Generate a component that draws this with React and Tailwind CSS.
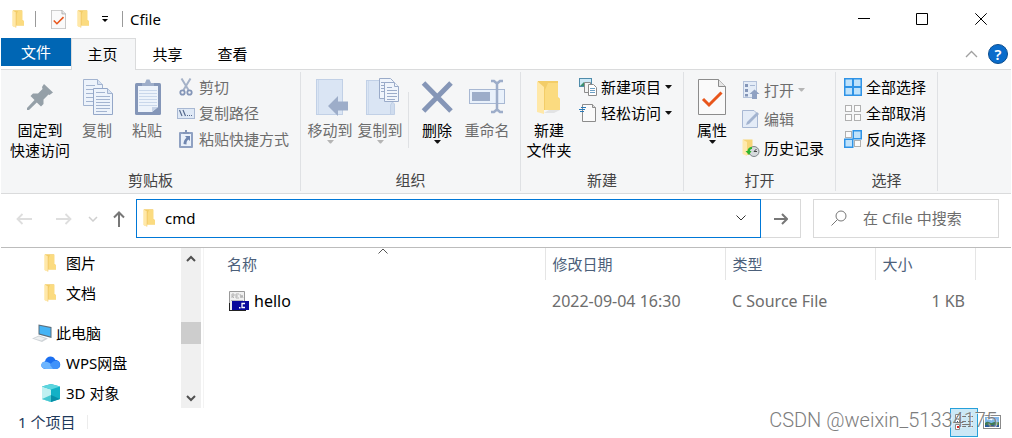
import React, { useState } from 'react';

function Folder({ className = 'w-3 h-[18px]' }) {
  return (
    <svg viewBox="0 0 24 36" preserveAspectRatio="none" className={className}>
      <path d="M2 0.5H20.5V20L24 22V31H8L2 33Z" fill="#f3cd68" />
      <path d="M9 9L12 2H20.5V21L24 22V31H9Z" fill="#fbdb80" />
      <path d="M0.5 0.5L8 5V35.5L0.5 32Z" fill="#ffe8a8" />
      <path d="M8 5V35" stroke="#eec261" strokeWidth="1" />
    </svg>
  );
}

function Caret({ className = 'text-black' }) {
  return (
    <svg viewBox="0 0 7 4" className={`w-[7px] h-1 shrink-0 ${className}`}>
      <path d="M0 0H7L4 3.5H3Z" fill="currentColor" />
    </svg>
  );
}

function CheckDoc({ className }) {
  return (
    <svg viewBox="0 0 28 36" className={className}>
      <path d="M0.5 0.5H20.5L27.5 7.5V35.5H0.5Z" fill="#fafafa" stroke="#8c8c8c" />
      <path d="M20.5 0.5V7.5H27.5" fill="#e6e6e6" stroke="#8c8c8c" />
      <path d="M5 20L11 26L23.5 13.5" fill="none" stroke="#e8561c" strokeWidth="3" />
    </svg>
  );
}

const bigIcon = 'w-10 h-10';
const smallIcon = 'w-[18px] h-[18px] shrink-0';

const PinIcon = () => (
  <svg viewBox="0 0 40 40" className={bigIcon}>
    <path d="M24 6L33 14.5L29.5 17L28.5 16.5L23.5 21.5V26L21 28.5L16.8 24.5L9 32H7V30L14.5 22L10.5 18L13 15.5H18L22.5 11L22 9Z" fill="#95a0a8" />
  </svg>
);

const CopyIcon = () => (
  <svg viewBox="0 0 40 40" className={bigIcon}>
    <g fill="#edf3fb" stroke="#a3b4d0">
      <path d="M6.5 1.5H20.5L25.5 6.5V27.5H6.5Z" />
      <path d="M20.5 1.5V6.5H25.5" fill="#d7e2f2" />
      <path d="M9 7.5H18M9 11.5H22M9 15.5H16M9 19.5H16M9 23.5H16" />
      <path d="M16.5 10.5H30.5L35.5 15.5V36.5H16.5Z" stroke="#94a7c8" />
      <path d="M30.5 10.5V15.5H35.5" fill="#d7e2f2" />
      <path d="M19 14.5H28M19 18.5H33M19 21.5H33M19 24.5H33M19 27.5H33M19 30.5H33M19 33.5H30" />
    </g>
  </svg>
);

const PasteIcon = () => (
  <svg viewBox="0 0 40 40" className={bigIcon}>
    <rect x="8" y="5" width="26" height="32" rx="1.5" fill="#8496b8" />
    <path d="M11 8H31V29L25 34H11Z" fill="#edf3fb" />
    <path d="M25 34V29H31Z" fill="#c5d2e7" />
    <path d="M12 12.5H30M12 15.5H30M12 18.5H30M12 21.5H30M12 24.5H30M12 27.5H30" stroke="#c9d7eb" />
    <path d="M15 8V5H18L19.5 1.5H22.5L24 5H27V8Z" fill="#9dadc9" />
  </svg>
);

const MoveIcon = () => (
  <svg viewBox="0 0 40 40" className={bigIcon}>
    <rect x="6.5" y="1.5" width="26" height="35" fill="#dae5f4" stroke="#c1d0e6" />
    <path d="M8.5 2V36" stroke="#cbd9ec" />
    <path d="M18 28L28 18V23.5H38V32.5H28V38Z" fill="#9dadc9" />
  </svg>
);

const CopyToIcon = () => (
  <svg viewBox="0 0 40 40" className={bigIcon}>
    <rect x="6.5" y="2.5" width="26" height="34" fill="#dae5f4" stroke="#c1d0e6" />
    <path d="M8.5 3V36" stroke="#cbd9ec" />
    <path d="M30.5 36.5V27L32.5 24L34.5 26V36.5Z" fill="#cfdcee" stroke="#c1d0e6" />
    <g fill="#f0f5fc" stroke="#9aabc9">
      <path d="M19.5 0.5H30.5L33.5 3.5V20.5H19.5Z" />
      <path d="M21 4.5H25M21 7.5H25M21 10.5H25M21 13.5H25" />
      <path d="M24.5 4.5H34.5L38.5 8.5V23.5H24.5Z" />
      <path d="M34.5 4.5V8.5H38.5" />
      <path d="M27 9.5H32M27 12.5H37M27 15.5H37M27 18.5H37M27 21.5H35" />
    </g>
  </svg>
);

const DeleteIcon = () => (
  <svg viewBox="0 0 40 40" className={bigIcon}>
    <path d="M6.5 5L34 33M34 5L6.5 33" stroke="#8596b7" strokeWidth="5" />
  </svg>
);

const RenameIcon = () => (
  <svg viewBox="0 0 40 40" className={bigIcon}>
    <rect x="2.5" y="11.5" width="35" height="14" fill="#e9f1fb" stroke="#a8b8d3" />
    <rect x="5" y="14" width="18" height="9" fill="#9dadc9" />
    <path d="M24 3H27L30 5.5L33 3H36M30 5.5V31.5M24 34H27L30 31.5L33 34H36" fill="none" stroke="#9dadc9" strokeWidth="2.5" />
  </svg>
);

const NewFolderIcon = () => (
  <svg viewBox="0 0 40 40" className={bigIcon}>
    <path d="M15 35L20 32H31L25 35Z" fill="#e2e3e4" />
    <path d="M9 3H29V19L31 21V32H15L9 34Z" fill="#f3cd68" />
    <path d="M16 12L19 5H29V20L31 21V32H16Z" fill="#fbdb80" />
    <path d="M8 3L15 9V36L8 34Z" fill="#ffe8a8" />
  </svg>
);

const PropertiesIcon = () => (
  <span className="flex w-10 h-10 justify-center pt-px">
    <CheckDoc className="w-7 h-9" />
  </span>
);

const CutIcon = () => (
  <svg viewBox="0 0 18 18" className={smallIcon}>
    <path d="M4.5 0.5L11.5 12M13.5 0.5L6.5 12" stroke="#a5b2c8" strokeWidth="2" />
    <circle cx="5.5" cy="14.5" r="2.2" fill="none" stroke="#8496b8" strokeWidth="1.8" />
    <circle cx="12.5" cy="14.5" r="2.2" fill="none" stroke="#8496b8" strokeWidth="1.8" />
  </svg>
);

const PathIcon = () => (
  <svg viewBox="0 0 18 18" className={smallIcon}>
    <rect x="0.5" y="4.5" width="17" height="10" fill="#dfe9f6" stroke="#a8b8d3" />
    <path d="M2.5 6L5 12M6 6L8.5 12" stroke="#566a8e" strokeWidth="1.2" />
    <path d="M10 11.5H11M12 11.5H13M14 11.5H15" stroke="#566a8e" />
  </svg>
);

const ShortcutIcon = () => (
  <svg viewBox="0 0 18 18" className={smallIcon}>
    <rect x="2" y="2" width="14" height="16" rx="1" fill="#8fa1c2" />
    <path d="M4 4H14V16H4Z" fill="#eaf1fa" />
    <path d="M6 4V2H8V0H10V2H12V4Z" fill="#8496b8" />
    <path d="M8 6H13V11L11.3 9.5C9.500 11 9.500 12.500 9.500 14.500L6.500 14C6.500 11.500 7.500 9.500 9.500 7.800Z" fill="#6f86b0" />
  </svg>
);

const NewItemIcon = () => (
  <svg viewBox="0 0 18 18" className={smallIcon}>
    <rect x="0.5" y="0.5" width="12" height="8" fill="#cde9f7" stroke="#4f8cab" />
    <path d="M1 8L5 4L8 8Z" fill="#3c8f6c" />
    <path d="M5.5 4.5H11.5V14.5H5.5Z" fill="#f4f4f4" stroke="#8c8c8c" />
    <path d="M9.5 6.5H14.5L17.5 9.5V17.5H9.5Z" fill="#fff" stroke="#8c8c8c" />
    <path d="M11 10.5H16M11 12.5H16M11 14.5H16" stroke="#6ea0c4" />
  </svg>
);

const EasyAccessIcon = () => (
  <svg viewBox="0 0 18 18" className={smallIcon}>
    <path d="M3.5 0.5H13.5L16.5 3.5V17.5H3.5Z" fill="#fafafa" stroke="#8c8c8c" />
    <path d="M13.5 0.5V3.5H16.5" fill="#ddd" stroke="#8c8c8c" />
    <path d="M2 3.5H7M0 5.5H6M1 7.5H5" stroke="#2a7ab8" strokeWidth="1.2" />
  </svg>
);

const OpenIcon = () => (
  <svg viewBox="0 0 18 18" className={smallIcon}>
    <rect x="1.5" y="0.5" width="13" height="16" fill="#e4ecf7" stroke="#b4c2da" />
    <path d="M3 3H6V6H3ZM3 8H6V11H3ZM3 13H6V15.5H3Z" fill="#8496b8" />
    <path d="M8 4.5H13" stroke="#a8b8d3" />
    <path d="M12.500 8.500L17.500 13H15V18H10V13H7.500Z" fill="#8fa1c2" />
  </svg>
);

const EditIcon = () => (
  <svg viewBox="0 0 18 18" className={smallIcon}>
    <path d="M0.5 0.5H12L15.5 4V17.5H0.5Z" fill="#e4ecf7" stroke="#a8b8d3" />
    <path d="M4 15L5 12L15 2L17 4L7 14Z" fill="#a3b4d0" />
  </svg>
);

const HistoryIcon = () => (
  <svg viewBox="0 0 18 18" className={smallIcon}>
    <path d="M1 0.5H10.500V15L5 16Z" fill="#f7d577" />
    <path d="M0.5 0.5L5 3V17L0.5 15Z" fill="#ffe9ad" />
    <circle cx="12" cy="12.5" r="5" fill="#d6dadd" stroke="#7e8589" />
    <path d="M12 12.500L14.500 10M12 12.500H15" fill="none" stroke="#444" />
    <path d="M10 8C7 8 5.5 10 5.5 12H3.5L7 16L9.5 12H8C8 10.5 9 10 10 10Z" fill="#2fb52f" />
  </svg>
);

const Tile = ({ x, y, on }) => (
  <rect x={x} y={y} width={on ? 8 : 6} height={on ? 8 : 6} fill={on ? '#bfe2fb' : '#fbfbfb'} stroke={on ? '#2f93e6' : '#b0b0b0'} strokeWidth={on ? 1.5 : 1} />
);

const SelectAllIcon = () => (
  <svg viewBox="0 0 18 18" className={smallIcon}>
    <Tile x={0.75} y={0.75} on />
    <Tile x={9.25} y={0.75} on />
    <Tile x={0.75} y={9.25} on />
    <Tile x={9.25} y={9.25} on />
  </svg>
);

const SelectNoneIcon = () => (
  <svg viewBox="0 0 18 18" className={smallIcon}>
    <Tile x={1.5} y={1.5} />
    <Tile x={10.5} y={1.5} />
    <Tile x={1.5} y={10.5} />
    <Tile x={10.5} y={10.5} />
  </svg>
);

const InvertIcon = () => (
  <svg viewBox="0 0 18 18" className={smallIcon}>
    <Tile x={1.5} y={1.5} />
    <Tile x={9.25} y={0.75} on />
    <Tile x={0.75} y={9.25} on />
    <Tile x={10.5} y={10.5} />
  </svg>
);

const ComputerIcon = () => (
  <svg viewBox="0 0 20 18" className="w-5 h-[18px] shrink-0">
    <path d="M6.5 0.5L19.500 3V14L6.5 10.500Z" fill="#5d6f7c" />
    <path d="M7.5 1.8L18.500 4V12.500L7.5 9.500Z" fill="#45b4f5" />
    <path d="M0 14.500L7 11.500L16 14.500L10 18Z" fill="#cfd4d8" />
    <path d="M2 14.500L7 12.500L13 14.500L9.500 16.500Z" fill="#eef0f1" />
  </svg>
);

const CloudIcon = () => (
  <svg viewBox="0 0 20 18" className="w-5 h-[18px] shrink-0">
    <path d="M5 15C-1 15-1 8 4 7.5C5 2 12 0.5 14.5 6C20.5 6 21 15 15 15Z" fill="#1b6ff0" />
    <path d="M3 7.800C7 7 10 9 14 15H5C-1 15-1 9 3 7.800Z" fill="#6db5ff" />
    <path d="M9 11C11 7 14 6 17 7C20 9 19.5 15 15 15H12Z" fill="#3f92fa" />
  </svg>
);

const CubeIcon = () => (
  <svg viewBox="0 0 20 18" className="w-5 h-[18px] shrink-0">
    <path d="M10 0L19 2.5V15L10 18L1 15V2.5Z" fill="#12b1c6" />
    <path d="M1 2.5L10 5.5V18L1 15Z" fill="#bff0f1" />
    <path d="M10 0L19 2.5L10 5.5L1 2.5Z" fill="#5cd5de" />
    <path d="M1 15L10 11V18Z" fill="#46c8d2" />
    <path d="M10 11L19 15L10 18Z" fill="#078fa8" />
  </svg>
);

const CFileIcon = () => (
  <svg viewBox="0 0 20 20" className="w-5 h-5 shrink-0">
    <path d="M0.5 0.5H15.5V19.5H0.5Z" fill="#f0f0f0" stroke="#999" />
    <path d="M3 3V7M3 3H5V5H3L5 7M10 3H7V7H10M7 5H9M11 3L12 7L13 4L14 7" fill="none" stroke="#b5b5b5" />
    <path d="M2 9.5H14" stroke="#bbb" />
    <rect x="3" y="10" width="17" height="9" fill="#0a0a9c" />
    <path d="M0 19.5H17M0.500 12V19" stroke="#222" />
    <path d="M16 12.5H13V16.5H16" fill="none" stroke="#fff" strokeWidth="1.3" />
    <rect x="10" y="16" width="1.5" height="1.5" fill="#fff" />
  </svg>
);

function Group({ label, className, children }) {
  return (
    <section className={`flex flex-col justify-between shrink-0 my-0.5 border-r border-[#dfe1e4] ${className}`}>
      <div className="flex">{children}</div>
      <h2 className="text-center text-[#444] leading-5 pb-px">{label}</h2>
    </section>
  );
}

function BigButton({ icon: Icon, lines, disabled, caret, className = 'w-[50px]' }) {
  return (
    <button disabled={disabled} className={`flex flex-col items-center shrink-0 pt-1.5 leading-5 whitespace-nowrap disabled:text-[#6d6d6d] ${className}`}>
      <Icon />
      <span className="h-0.5" />
      {lines.map((line) => <span key={line}>{line}</span>)}
      {caret && <Caret className={disabled ? 'text-[#b5b5b5]' : 'text-[#111]'} />}
    </button>
  );
}

function SmallButton({ icon: Icon, label, disabled, caret, className = 'h-[26px]' }) {
  return (
    <button disabled={disabled} className={`flex items-center gap-1 whitespace-nowrap disabled:text-[#6d6d6d] ${className}`}>
      <Icon />
      {label}
      {caret && <Caret className={disabled ? 'text-[#b5b5b5]' : 'text-[#111]'} />}
    </button>
  );
}

function Ribbon() {
  return (
    <div className="flex h-[124px] bg-[#f5f6f7] border-b border-[#dadbdc] overflow-hidden">
      <Group label="剪贴板" className="w-[300px]">
        <BigButton icon={PinIcon} lines={['固定到', '快速访问']} className="w-[62px] ml-2" />
        <BigButton icon={CopyIcon} lines={['复制']} disabled className="w-[50px] ml-px" />
        <BigButton icon={PasteIcon} lines={['粘贴']} disabled />
        <div className="flex flex-col items-start pt-0.5 pl-[5px]">
          <SmallButton icon={CutIcon} label="剪切" disabled />
          <SmallButton icon={PathIcon} label="复制路径" disabled />
          <SmallButton icon={ShortcutIcon} label="粘贴快捷方式" disabled />
        </div>
      </Group>
      <Group label="组织" className="w-[220px]">
        <BigButton icon={MoveIcon} lines={['移动到']} disabled caret className="w-[50px] ml-1" />
        <BigButton icon={CopyToIcon} lines={['复制到']} disabled caret />
        <div className="w-px h-14 mt-5 mx-[3px] bg-[#dfe1e4]" />
        <BigButton icon={DeleteIcon} lines={['删除']} caret />
        <BigButton icon={RenameIcon} lines={['重命名']} disabled />
      </Group>
      <Group label="新建" className="w-[163px]">
        <BigButton icon={NewFolderIcon} lines={['新建', '文件夹']} className="w-[50px] ml-[3px]" />
        <div className="flex flex-col items-start pt-0.5 pl-[5px]">
          <SmallButton icon={NewItemIcon} label="新建项目" caret />
          <SmallButton icon={EasyAccessIcon} label="轻松访问" caret />
        </div>
      </Group>
      <Group label="打开" className="w-[152px]">
        <BigButton icon={PropertiesIcon} lines={['属性']} caret className="w-[50px] ml-[3px]" />
        <div className="flex flex-col items-start pt-[3px] pl-[5px]">
          <SmallButton icon={OpenIcon} label="打开" disabled caret className="h-[29px]" />
          <SmallButton icon={EditIcon} label="编辑" disabled className="h-[29px]" />
          <SmallButton icon={HistoryIcon} label="历史记录" className="h-[29px]" />
        </div>
      </Group>
      <Group label="选择" className="w-[102px]">
        <div className="flex flex-col items-start pt-0.5 pl-2">
          <SmallButton icon={SelectAllIcon} label="全部选择" />
          <SmallButton icon={SelectNoneIcon} label="全部取消" />
          <SmallButton icon={InvertIcon} label="反向选择" />
        </div>
      </Group>
    </div>
  );
}

function TitleBar() {
  return (
    <header className="flex items-center h-[38px] pl-[11px]">
      <Folder />
      <span className="w-px h-4 ml-[11px] bg-[#9a9a9a]" />
      <button aria-label="属性" className="ml-[15px]"><CheckDoc className="w-[15px] h-[19px]" /></button>
      <button aria-label="新建文件夹" className="ml-[11px]"><Folder /></button>
      <button aria-label="自定义快速访问工具栏" className="ml-3">
        <svg viewBox="0 0 8 6" className="w-2 h-1.5"><path d="M1 0.5H7" stroke="#000" /><path d="M1 3H7L4 6Z" /></svg>
      </button>
      <span className="w-px h-4 ml-[13px] mr-[7px] bg-[#9a9a9a]" />
      <h1 className="flex-1">Cfile</h1>
      <button aria-label="最小化" className="flex justify-center w-[58px]">
        <svg viewBox="0 0 12 12" className="w-3 h-3"><path d="M0 5.5H12" stroke="#000" /></svg>
      </button>
      <button aria-label="最大化" className="flex justify-center w-[58px]">
        <svg viewBox="0 0 12 12" className="w-3 h-3"><path d="M0.5 0.5H11.5V11.5H0.5Z" fill="none" stroke="#000" /></svg>
      </button>
      <button aria-label="关闭" className="flex justify-center w-[60px]">
        <svg viewBox="0 0 12 12" className="w-3 h-3"><path d="M0.3 0.3L11.7 11.7M11.7 0.3L0.3 11.7" stroke="#000" /></svg>
      </button>
    </header>
  );
}

function Tabs() {
  const [active, setActive] = useState('主页');
  return (
    <nav className="flex h-8 border-b border-[#dadbdc]">
      <button className="w-[70px] h-7 bg-[#0066b4] text-white">文件</button>
      {['主页', '共享', '查看'].map((tab) => (
        <button
          key={tab}
          onClick={() => setActive(tab)}
          className={`w-[65px] pb-0.5 pr-0.5 border-x border-t ${active === tab ? 'h-8 bg-[#f5f6f7] border-[#dadbdc]' : 'h-8 border-transparent'}`}
        >
          {tab}
        </button>
      ))}
      <div className="flex items-center gap-2.5 ml-auto mr-[3px]">
        <button aria-label="最小化功能区">
          <svg viewBox="0 0 13 8" className="w-[13px] h-2"><path d="M1 7L6.5 1.5L12 7" fill="none" stroke="#a0a0a0" strokeWidth="1.3" /></svg>
        </button>
        <button className="w-5 h-5 rounded-full border border-[#0b4d8f] bg-[#0a6ccb] text-white text-[15px] leading-[18px] font-semibold">?</button>
      </div>
    </nav>
  );
}

function AddressBar() {
  const [path, setPath] = useState('cmd');
  return (
    <div className="flex items-center pt-[5px] pb-[9px] pl-[15px] pr-3">
      <button aria-label="后退" disabled>
        <svg viewBox="0 0 16 12" className="w-4 h-3"><path d="M6.5 1L1.5 6L6.5 11M1.5 6H16" fill="none" stroke="#dedede" strokeWidth="1.8" /></svg>
      </button>
      <button aria-label="前进" disabled className="ml-6">
        <svg viewBox="0 0 16 12" className="w-4 h-3"><path d="M9.5 1L14.5 6L9.5 11M14.5 6H0" fill="none" stroke="#dedede" strokeWidth="1.8" /></svg>
      </button>
      <button aria-label="最近浏览的位置" className="ml-4">
        <svg viewBox="0 0 10 6" className="w-2.5 h-1.5"><path d="M1 1L5 5L9 1" fill="none" stroke="#cfcfcf" strokeWidth="1.5" /></svg>
      </button>
      <button aria-label="上移" className="ml-[15px]">
        <svg viewBox="0 0 12 16" className="w-3 h-4"><path d="M1 6.5L6 1.5L11 6.5M6 1.5V16" fill="none" stroke="#777" strokeWidth="2" /></svg>
      </button>
      <div className="flex items-center flex-1 min-w-0 h-[39px] ml-[11px] pl-1.5 pb-px border border-[#0078d7]">
        <Folder />
        <input aria-label="地址" value={path} onChange={(e) => setPath(e.target.value)} className="flex-1 min-w-0 ml-2.5 outline-none" />
        <button aria-label="以前的位置" className="mr-3.5">
          <svg viewBox="0 0 10 6" className="w-2.5 h-1.5"><path d="M0.5 0.5L5 5L9.5 0.5" fill="none" stroke="#333" /></svg>
        </button>
      </div>
      <button aria-label="转到" className="flex items-center justify-center w-10 h-[39px] border border-l-0 border-[#d9d9d9]">
        <svg viewBox="0 0 14 12" className="w-3.5 h-3"><path d="M8 1L13 6L8 11M13 6H0" fill="none" stroke="#777" strokeWidth="2" /></svg>
      </button>
      <label className="flex items-center w-[186px] h-[39px] ml-3 pl-[17px] pb-px border border-[#d9d9d9]">
        <svg viewBox="0 0 16 16" className="w-4 h-4 shrink-0">
          <circle cx="10" cy="6" r="5" fill="none" stroke="#777" />
          <path d="M6.5 9.5L0.5 15.5" stroke="#777" />
        </svg>
        <input aria-label="搜索" placeholder="在 Cfile 中搜索" className="w-full min-w-0 ml-4 outline-none placeholder:text-[#6d6d6d]" />
      </label>
    </div>
  );
}

const treeItems = [
  { label: '图片', icon: Folder, className: 'pl-[43px] gap-2.5' },
  { label: '文档', icon: Folder, className: 'pl-[43px] gap-2.5' },
  { label: '此电脑', icon: ComputerIcon, className: 'pl-[31px] gap-1 mt-2.5' },
  { label: 'WPS网盘', icon: CloudIcon, className: 'pl-10 gap-[5px]' },
  { label: '3D 对象', icon: CubeIcon, className: 'pl-10 gap-[5px]' },
];

function Sidebar() {
  return (
    <aside className="flex w-[203px] shrink-0 border-r border-[#f3f3f3] pr-0.5">
      <ul className="flex-1">
        {treeItems.map(({ label, icon: Icon, className }) => (
          <li key={label}>
            <button className={`flex items-center h-[30px] ${className}`}>
              <Icon />
              {label}
            </button>
          </li>
        ))}
      </ul>
      <div className="flex flex-col items-center w-5 bg-[#f0f0f0]">
        <button aria-label="向上滚动" className="flex items-center justify-center w-5 h-5">
          <svg viewBox="0 0 10 7" className="w-2.5 h-[7px]"><path d="M1 6L5 2L9 6" fill="none" stroke="#505050" strokeWidth="2" /></svg>
        </button>
        <span className="w-full h-[22px] mt-[54px] bg-[#cdcdcd]" />
        <button aria-label="向下滚动" className="flex items-center justify-center w-5 h-5 mt-auto">
          <svg viewBox="0 0 10 7" className="w-2.5 h-[7px]"><path d="M1 1L5 5L9 1" fill="none" stroke="#505050" strokeWidth="2" /></svg>
        </button>
      </div>
    </aside>
  );
}

function FileTable() {
  return (
    <div className="flex-1 min-w-0">
      <table className="w-full table-fixed text-left">
        <colgroup>
          <col />
          <col className="w-[180px]" />
          <col className="w-[150px]" />
          <col className="w-[100px]" />
          <col className="w-9" />
        </colgroup>
        <thead className="text-[#4c607a]">
          <tr className="h-8">
            <th className="relative pl-[23px] font-normal border-r border-[#e5e5e5]">
              名称
              <svg viewBox="0 0 10 6" className="absolute top-0 left-1/2 w-2.5 h-1.5 ml-1"><path d="M0.5 5.5L5 1L9.5 5.5" fill="none" stroke="#555" /></svg>
            </th>
            <th className="pl-[7px] font-normal border-r border-[#e5e5e5]">修改日期</th>
            <th className="pl-[7px] font-normal border-r border-[#e5e5e5]">类型</th>
            <th className="pl-[7px] font-normal border-r border-[#e5e5e5]">大小</th>
            <th aria-label="空" />
          </tr>
        </thead>
        <tbody className="text-base text-[#6d6d6d]">
          <tr>
            <td className="pt-1.5 pl-[25px]">
              <div className="flex items-center gap-[5px] h-[30px] text-black"><CFileIcon />hello</div>
            </td>
            <td className="pt-1.5 pl-[7px]">2022-09-04 16:30</td>
            <td className="pt-1.5 pl-[7px]">C Source File</td>
            <td className="pt-1.5 pr-2.5 text-right">1 KB</td>
            <td />
          </tr>
        </tbody>
      </table>
    </div>
  );
}

function StatusBar() {
  return (
    <footer className="relative flex items-center h-[30px] pb-0.5 pl-[17px] pr-2.5 text-[#1e395b]">
      <span>1 个项目</span>
      <span className="w-px h-3.5 ml-3 bg-[#ececec]" />
      <button aria-label="详细信息" className="flex items-center justify-center w-7 h-[29px] ml-auto border border-[#26a0da] bg-[#cbe8f6]">
        <svg viewBox="0 0 18 16" className="w-[18px] h-4">
          <path d="M0.5 0.5H4.5V4.5H0.5ZM0.5 5.5H4.5V9.5H0.5ZM0.5 10.5H4.5V15.5H0.5Z" fill="#fff" stroke="#8a8a8a" />
          <path d="M2 12H4V14H2Z" fill="#d22" />
          <path d="M2 2H3V3H2ZM2 7H3V8H2Z" fill="#357" />
          <path d="M7 2.5H11M13 2.5H18M7 7.5H11M13 7.5H18M7 10.5H16M7 12.5H11M13 12.5H18" stroke="#777" />
        </svg>
      </button>
      <button aria-label="大缩略图" className="ml-[5px]">
        <svg viewBox="0 0 18 14" className="w-[18px] h-3.5">
          <rect x="0.5" y="0.5" width="17" height="13" fill="#fff" stroke="#8a8a8a" />
          <rect x="2" y="2" width="14" height="10" fill="#7fb8ea" />
          <path d="M2 8C5 5 7 8 9 8C12 6 14 8 16 7V12H2Z" fill="#3d7a54" />
          <path d="M2 10H16V12H2Z" fill="#2a5a9a" />
          <path d="M4 4C6 3 8 4 9 5" stroke="#fff" strokeWidth="1.5" fill="none" />
        </svg>
      </button>
      <span className="absolute right-3.5 top-0 text-[20px] leading-6 font-light text-[#7d7d7d] pointer-events-none font-['Roboto','Liberation_Sans',sans-serif] [text-shadow:1px_1px_0_#ffffffb0]">
        CSDN @weixin_51334175
      </span>
    </footer>
  );
}

export default function App() {
  return (
    <div className="flex flex-col min-h-screen px-px bg-white text-[15px] leading-5 text-black font-['Noto_Sans','Noto_Sans_CJK_SC',sans-serif]">
      <TitleBar />
      <Tabs />
      <Ribbon />
      <AddressBar />
      <main className="flex flex-1 border-t border-[#bcbcbc]">
        <Sidebar />
        <FileTable />
      </main>
      <StatusBar />
    </div>
  );
}
